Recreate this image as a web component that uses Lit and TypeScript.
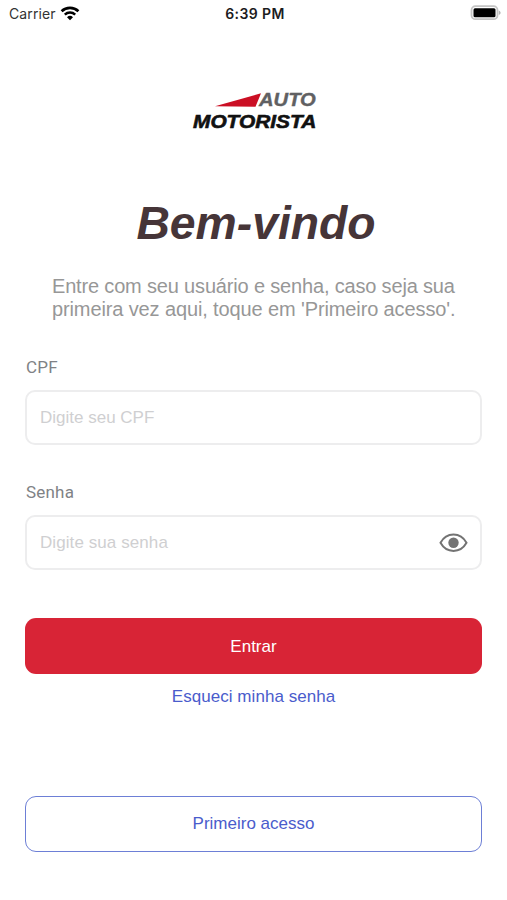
import { LitElement, html, css, svg } from "lit";
import { customElement, property } from "lit/decorators.js";

@customElement("status-bar")
class StatusBar extends LitElement {
  static styles = css`
    :host {
      display: grid;
      grid-template-columns: 1fr auto 1fr;
      align-items: center;
      height: 28px;
      padding: 0 6px 0 9px;
      font: 14px/28px Inter, "Liberation Sans", sans-serif;
      color: #1c1c1e;
    }
    .carrier { display: flex; align-items: center; gap: 4px; }
    .carrier svg { margin-top: -2px; }
    .label { letter-spacing: 0.1px; color: #333; }
    .time { font-weight: 600; font-size: 14px; letter-spacing: 0.4px; }
    .battery { justify-self: end; display: block; margin-top: -2px; }
  `;
  render() {
    return html`
      <div class="carrier">
        <span class="label">Carrier</span>
        <svg width="20" height="15" viewBox="0 0 20 15">
          <path d="M1.6 5.3a12.2 12.2 0 0 1 16.8 0" fill="none" stroke="#000" stroke-width="2.7"></path>
          <path d="M4.8 8.6a7.6 7.6 0 0 1 10.4 0" fill="none" stroke="#000" stroke-width="2.5"></path>
          <path d="M10 14.3 7 11.3a4.3 4.3 0 0 1 6 0z"></path>
        </svg>
      </div>
      <div class="time">6:39 PM</div>
      <svg class="battery" width="31" height="16" viewBox="0 0 31 16">
        <rect x="1.5" y="1.2" width="26" height="13" rx="4" fill="#fff" stroke="#c4c4c4" stroke-width="1.8"></rect>
        <rect x="3.5" y="3.2" width="22" height="9" rx="1.5"></rect>
        <path d="M28.8 5.5c2.4 1 2.4 3.6 0 4.6z" fill="#b5b5b5"></path>
      </svg>
    `;
  }
}

@customElement("brand-logo")
class BrandLogo extends LitElement {
  static styles = css`
    :host { display: block; width: 126px; height: 40px; }
    svg { display: block; overflow: visible; }
    text { font-family: "Liberation Sans", Arial, sans-serif; font-weight: 700; font-style: italic; }
    .auto { font-size: 18.5px; fill: #606062; stroke: #606062; stroke-width: 0.4; }
    .motorista { font-size: 19px; fill: #111; stroke: #111; stroke-width: 0.6; }
  `;
  render() {
    return html`<svg width="126" height="40" viewBox="0 0 126 40">
      ${svg`
        <path d="M24 15.2 70 2.3 64.5 15.7z" fill="#cb0f24"></path>
        <text class="auto" x="68" y="15.2" textLength="56.8" lengthAdjust="spacingAndGlyphs">AUTO</text>
        <text class="motorista" x="2" y="37.4" textLength="123.3" lengthAdjust="spacingAndGlyphs">MOTORISTA</text>
      `}
    </svg>`;
  }
}

@customElement("form-field")
class FormField extends LitElement {
  @property() label = "";
  @property() placeholder = "";
  @property({ type: Boolean }) secret = false;

  static styles = css`
    :host { display: block; font-family: "Liberation Sans", Arial, sans-serif; }
    .label { display: block; height: 22px; padding-left: 1px; font: 17px/22px Roboto, sans-serif; letter-spacing: 0.2px; color: #808285; }
    .box {
      box-sizing: border-box;
      display: flex;
      align-items: center;
      justify-content: space-between;
      height: 55px;
      margin-top: 12px;
      padding: 0 12px 0 13px;
      border: 2px solid #ededee;
      border-radius: 10px;
    }
    .hint { font-size: 17px; line-height: 24px; color: #cfcfd1; }
    .hint.wide { letter-spacing: 0.08px; }
  `;
  render() {
    return html`
      <span class="label">${this.label}</span>
      <div class="box">
        <span class="hint ${this.secret ? "wide" : ""}">${this.placeholder}</span>
        ${this.secret
          ? html`<svg width="29" height="20" viewBox="0 0 29 20">
              <path d="M1.5 9.8C7.500-1.200 21.500-1.200 27.500 9.8 21.500 20.600 7.500 20.600 1.500 9.8z" fill="none" stroke="#737373" stroke-width="2"></path>
              <circle cx="14.5" cy="9.8" r="5.2" fill="#737373"></circle>
            </svg>`
          : null}
      </div>
    `;
  }
}

@customElement("app-root")
class AppRoot extends LitElement {
  static styles = css`
    :host {
      display: flex;
      flex-direction: column;
      height: 900px;
      background: #fff;
      font-family: "Liberation Sans", Arial, sans-serif;
    }
    brand-logo { margin: 63px 0 0 191px; }
    .title {
      margin: 64px 0 0 5px;
      height: 56px;
      font-size: 46.3px;
      line-height: 56px;
      font-weight: 700;
      font-style: italic;
      text-align: center;
      color: #463538;
    }
    .intro {
      margin: 24px 0 0 52px;
      font-size: 20px;
      line-height: 22.5px;
      color: #979797;
      white-space: nowrap;
    }
    .line { display: block; letter-spacing: -0.17px; }
    .line + .line { letter-spacing: -0.12px; }
    .form { display: flex; flex-direction: column; padding: 0 25px; margin-top: 36px; }
    .second { margin-top: 36px; }
    button {
      box-sizing: border-box;
      display: block;
      height: 56px;
      padding: 1px 0 0;
      border: 0;
      border-radius: 11px;
      font: 17px/24px "Liberation Sans", Arial, sans-serif;
      background: none;
      color: #4a5ccc;
    }
    .primary { margin-top: 48px; background: #d82436; color: #fff; }
    .link { margin: 10px auto 0; height: 24px; letter-spacing: 0.05px; }
    .outline { margin-top: 88px; padding: 0; height: 55.5px; border: 1.5px solid #6d7fd6; }
  `;
  render() {
    return html`
      <status-bar></status-bar>
      <brand-logo></brand-logo>
      <div class="title">Bem-vindo</div>
      <div class="intro">
        <span class="line">Entre com seu usuário e senha, caso seja sua</span>
        <span class="line">primeira vez aqui, toque em 'Primeiro acesso'.</span>
      </div>
      <div class="form">
        <form-field label="CPF" placeholder="Digite seu CPF"></form-field>
        <form-field class="second" label="Senha" placeholder="Digite sua senha" secret></form-field>
        <button class="primary">Entrar</button>
        <button class="link">Esqueci minha senha</button>
        <button class="outline">Primeiro acesso</button>
      </div>
    `;
  }
}
